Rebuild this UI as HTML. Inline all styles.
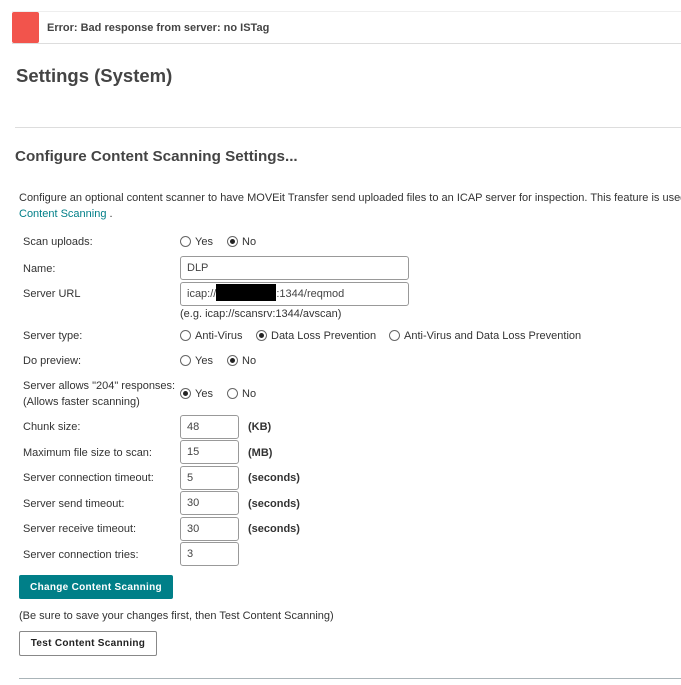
<!DOCTYPE html>
<html><head><meta charset="utf-8"><style>
*{margin:0;padding:0;box-sizing:border-box}
body{width:681px;height:685px;background:#fff;font-family:"Liberation Sans",Arial,sans-serif;color:#333;position:relative;overflow:hidden;font-size:11px}
.a{position:absolute;white-space:nowrap;line-height:14px;margin-top:1px}
.lbl{left:23px}
.inp{position:absolute;border:1px solid #999;border-radius:3px;background:#fff;height:24px;padding-left:6px;line-height:23px;font-size:11px;color:#444}
.r{position:absolute;width:11px;height:11px;border:1px solid #666;border-radius:50%;background:#fff;margin-top:1px}
.r.on::after{content:"";position:absolute;left:2px;top:2px;width:5px;height:5px;border-radius:50%;background:#222}
.u{font-weight:bold;left:248px}
</style></head><body>
<div style="position:absolute;left:12px;top:11px;width:669px;height:33px;border-top:1px solid #eee;border-bottom:1px solid #ddd"></div>
<div style="position:absolute;left:12px;top:12px;width:27px;height:31px;background:#f2544c;border-radius:2px"></div>
<div class="a" style="left:47px;top:20px;font-weight:bold;color:#444;font-size:11px">Error: Bad response from server: no ISTag</div>
<div class="a" style="left:16px;top:65px;font-weight:bold;color:#444;font-size:18.5px;line-height:22px;margin:0">Settings (System)</div>
<div style="position:absolute;left:15px;top:127px;width:666px;height:1px;background:#ddd"></div>
<div class="a" style="left:15px;top:148px;font-weight:bold;color:#444;font-size:15.2px;line-height:18px;margin:0">Configure Content Scanning Settings...</div>
<div class="a" style="left:19px;top:190px">Configure an optional content scanner to have MOVEit Transfer send uploaded files to an ICAP server for inspection. This feature is used</div>
<div class="a" style="left:19px;top:206px"><span style="color:#007f88">Content Scanning</span> .</div>

<div class="a lbl" style="top:234px">Scan uploads:</div>
<div class="r" style="left:180px;top:235px"></div><div class="a" style="left:195px;top:234px">Yes</div>
<div class="r on" style="left:227px;top:235px"></div><div class="a" style="left:242px;top:234px">No</div>

<div class="a lbl" style="top:261px">Name:</div>
<div class="inp" style="left:180px;top:256px;width:229px">DLP</div>
<div class="a lbl" style="top:286px">Server URL</div>
<div class="inp" style="left:180px;top:282px;width:229px">icap://<span style="display:inline-block;width:60px;height:17px;background:#000;vertical-align:-4px"></span>:1344/reqmod</div>
<div class="a" style="left:180px;top:306px">(e.g. icap://scansrv:1344/avscan)</div>

<div class="a lbl" style="top:328px">Server type:</div>
<div class="r" style="left:180px;top:329px"></div><div class="a" style="left:195px;top:328px">Anti-Virus</div>
<div class="r on" style="left:256px;top:329px"></div><div class="a" style="left:271px;top:328px">Data Loss Prevention</div>
<div class="r" style="left:389px;top:329px"></div><div class="a" style="left:404px;top:328px">Anti-Virus and Data Loss Prevention</div>

<div class="a lbl" style="top:353px">Do preview:</div>
<div class="r" style="left:180px;top:354px"></div><div class="a" style="left:195px;top:353px">Yes</div>
<div class="r on" style="left:227px;top:354px"></div><div class="a" style="left:242px;top:353px">No</div>

<div class="a lbl" style="top:378px">Server allows "204" responses:</div>
<div class="a lbl" style="top:394px">(Allows faster scanning)</div>
<div class="r on" style="left:180px;top:387px"></div><div class="a" style="left:195px;top:386px">Yes</div>
<div class="r" style="left:227px;top:387px"></div><div class="a" style="left:242px;top:386px">No</div>

<div class="a lbl" style="top:419px">Chunk size:</div>
<div class="inp" style="left:180px;top:415px;width:59px">48</div><div class="a u" style="top:419px">(KB)</div>
<div class="a lbl" style="top:445px">Maximum file size to scan:</div>
<div class="inp" style="left:180px;top:440px;width:59px">15</div><div class="a u" style="top:445px">(MB)</div>
<div class="a lbl" style="top:470px">Server connection timeout:</div>
<div class="inp" style="left:180px;top:466px;width:59px">5</div><div class="a u" style="top:470px">(seconds)</div>
<div class="a lbl" style="top:496px">Server send timeout:</div>
<div class="inp" style="left:180px;top:491px;width:59px">30</div><div class="a u" style="top:496px">(seconds)</div>
<div class="a lbl" style="top:521px">Server receive timeout:</div>
<div class="inp" style="left:180px;top:517px;width:59px">30</div><div class="a u" style="top:521px">(seconds)</div>
<div class="a lbl" style="top:547px">Server connection tries:</div>
<div class="inp" style="left:180px;top:542px;width:59px">3</div>

<div style="position:absolute;left:19px;top:575px;width:154px;height:24px;background:#007f88;border-radius:2px;color:#fff;font-weight:bold;font-size:10px;letter-spacing:.3px;text-align:center;line-height:25px">Change Content Scanning</div>
<div class="a" style="left:19px;top:608px">(Be sure to save your changes first, then Test Content Scanning)</div>
<div style="position:absolute;left:19px;top:631px;width:138px;height:25px;border:1px solid #888;border-radius:2px;color:#222;font-weight:bold;font-size:10px;letter-spacing:.3px;text-align:center;line-height:24px">Test Content Scanning</div>
<div style="position:absolute;left:19px;top:678px;width:662px;height:1px;background:#aab4b8"></div>
</body></html>
